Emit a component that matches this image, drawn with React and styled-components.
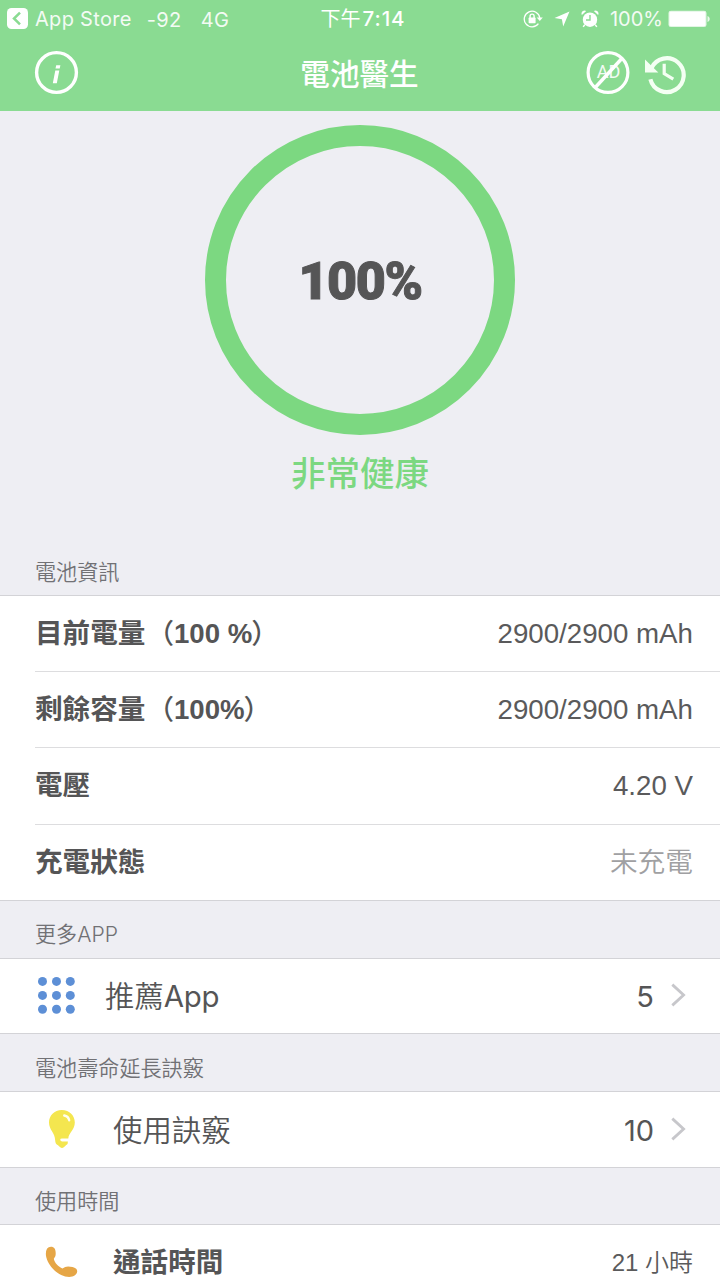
import React from 'react'
import styled, { createGlobalStyle } from 'styled-components'

const GlobalStyle = createGlobalStyle`
*{
  box-sizing: border-box;
}
body{
  margin: 0px;
  background-color: #eeeef3;
  overflow: hidden;
}
`;

const Screen = styled.div`
  width: 720px;
  height: 1280px;
  overflow: hidden;
  display: flex;
  flex-direction: column;
  background-color: #eeeef3;
  color: #555556;
  font-family: "Liberation Sans", "Noto Sans CJK TC", sans-serif;
`;

const Header = styled.header`
  height: 111px;
  flex-shrink: 0;
  background-color: #8adb92;
  color: white;
`;

const StatusBar = styled.div`
  height: 36px;
  display: grid;
  grid-template-columns: 1fr auto 1fr;
  align-items: center;
  padding: 0 10px 0 7px;
  font-family: Inter, "Noto Sans CJK TC", sans-serif;
  font-size: 20px;
  line-height: 36px;
`;

const StatusSide = styled.div`
  display: flex;
  align-items: center;
  height: 36px;
  white-space: pre;
  justify-content: ${(p) => (p.$end ? 'flex-end' : 'flex-start')};
`;

const StatusText = styled.span`
  margin-left: ${(p) => p.$left}px;
  padding-top: ${(p) => p.$top || 0}px;
  letter-spacing: ${(p) => p.$track || 0}px;
  opacity: 0.9;
`;

const Clock = styled.span`
  display: flex;
  padding: 1px 0 0 9px;
  font-size: 20px;
  span{
    font-weight: 500;
    margin-left: 2px;
    font-size: 20.5px;
    letter-spacing: 0.9px;
  }
`;

const StatusIcon = styled.svg`
  display: block;
  flex-shrink: 0;
  margin-left: ${(p) => p.$left || 0}px;
`;

const NavBar = styled.div`
  height: 73px;
  display: grid;
  grid-template-columns: 1fr auto 1fr;
  align-items: center;
  padding: 0 33px;
`;

const NavGroup = styled.div`
  display: flex;
  align-items: center;
  gap: 15px;
  justify-content: ${(p) => (p.$end ? 'flex-end' : 'flex-start')};
  svg{
    display: block;
  }
`;

const Title = styled.h1`
  margin: 0px;
  padding-right: 1px;
  font-family: "Noto Sans CJK TC", sans-serif;
  font-size: 29.6px;
  line-height: 72px;
  font-weight: 500;
`;

const Health = styled.section`
  height: 436px;
  flex-shrink: 0;
  display: flex;
  flex-direction: column;
  align-items: center;
  padding-top: 14px;
`;

const Ring = styled.div`
  width: 310px;
  height: 310px;
  border: 21px solid #7cd881;
  border-radius: 50%;
  display: flex;
  align-items: center;
  justify-content: center;
`;

const Percent = styled.span`
  padding-top: 4px;
  font-family: Roboto, sans-serif;
  font-weight: 900;
  font-size: 52px;
  line-height: 60px;
  letter-spacing: -1.5px;
  -webkit-text-stroke: 1px #555556;
`;

const Verdict = styled.div`
  margin-top: 11px;
  font-family: "Noto Sans CJK TC", sans-serif;
  font-size: 34.5px;
  line-height: 50px;
  font-weight: 500;
  color: #7cd881;
`;

const SectionTitle = styled.h2`
  margin: 0px;
  height: ${(p) => p.$height || 57}px;
  flex-shrink: 0;
  padding: ${(p) => (p.$top === undefined ? 9 : p.$top)}px 0 0 35px;
  font-family: ${(p) => (p.$cjk ? '"Noto Sans CJK TC", sans-serif' : 'Inter, "Noto Sans CJK TC", sans-serif')};
  font-size: 21.1px;
  line-height: 48px;
  font-weight: 350;
  color: #717175;
`;

const List = styled.div`
  flex-shrink: 0;
  background-color: white;
  border-top: 1px solid #d3d3d7;
  border-bottom: 1px solid #d3d3d7;
`;

const Row = styled.div`
  height: ${(p) => p.$height || 75}px;
  display: flex;
  align-items: center;
  padding-right: ${(p) => (p.$link ? 34 : 27)}px;
  margin-left: 35px;
  & + &{
    border-top: 1px solid #dddddf;
  }
`;

const IconCell = styled.div`
  width: ${(p) => p.$width}px;
  flex-shrink: 0;
  padding-bottom: ${(p) => p.$lift || 0}px;
  svg{
    display: block;
  }
`;

const Label = styled.span`
  flex: 1;
  font-size: 27.6px;
  line-height: 74px;
  font-weight: 700;
  white-space: pre;
`;

const Paren = styled.span`
  font-weight: 500;
  margin-left: ${(p) => p.$left || 0}px;
`;

const LinkLabel = styled.span`
  flex: 1;
  padding-top: 2px;
  font-family: Inter, "Noto Sans CJK TC", sans-serif;
  font-size: 29.4px;
  line-height: 72px;
  font-weight: 350;
`;

const Latin = styled.span`
  font-weight: 400;
  letter-spacing: -0.3px;
`;

const Value = styled.span`
  font-size: ${(p) => p.$size || 27.7}px;
  line-height: 74px;
  font-weight: ${(p) => p.$weight || 400};
  color: ${(p) => (p.$muted ? '#a0a0a2' : '#5a5a5b')};
`;

const Count = styled.span`
  padding-top: 2px;
  margin-right: 17px;
  font-family: Inter, sans-serif;
  font-size: 29px;
  line-height: 72px;
`;

const ChevronIcon = styled.svg`
  display: block;
  margin-bottom: 2px;
`;

const info = [
  { label: '目前電量', level: '100 %', value: '2900/2900 mAh', height: 75 },
  { label: '剩餘容量', level: '100%', value: '2900/2900 mAh', height: 76 },
  { label: '電壓', value: '4.20 V', height: 77 },
  { label: '充電狀態', value: '未充電', muted: true, height: 76 },
];

function BackIcon() {
  return (
    <StatusIcon width="21" height="21" viewBox="0 0 21 21">
      <rect width="21" height="21" rx="4.5" fill="#fff" />
      <path d="M13 4.6 L7 10.5 L13 16.4" fill="none" stroke="#8adb92" strokeWidth="2.5" />
    </StatusIcon>
  )
}

function LockIcon() {
  return (
    <StatusIcon width="20" height="20" viewBox="0 0 20 20">
      <path d="M15.4 14.6 A7.8 7.8 0 1 1 16.8 9" fill="none" stroke="#fff" strokeWidth="1.3" />
      <path d="M13.7 8.6 H19.8 L16.8 12 Z" fill="#fff" />
      <rect x="5.6" y="8.6" width="7" height="5.6" rx="0.6" fill="#fff" />
      <path d="M7.1 9 V7.1 A2 2 0 0 1 11.1 7.1 V9" fill="none" stroke="#fff" strokeWidth="1.4" />
    </StatusIcon>
  )
}

function LocationIcon() {
  return (
    <StatusIcon $left={11} width="16" height="16" viewBox="0 0 16 16">
      <path d="M15.5 0.5 L9.2 15.6 L7.9 8.3 L0.5 7 Z" fill="#fff" />
    </StatusIcon>
  )
}

function AlarmIcon() {
  return (
    <StatusIcon $left={11} width="18" height="18" viewBox="0 0 18 18">
      <circle cx="9" cy="9.7" r="7.2" fill="#fff" />
      <path d="M0.9 4.9 A3 3 0 0 1 5.2 1 Z M12.8 1 A3 3 0 0 1 17.1 4.9 Z" fill="#fff" />
      <path d="M3.8 14.6 L2.2 16.9 M14.2 14.6 L15.8 16.9" stroke="#fff" strokeWidth="1.5" />
      <path d="M9 5 V10 H5" fill="none" stroke="#8adb92" strokeWidth="1.4" />
    </StatusIcon>
  )
}

function BatteryIcon() {
  return (
    <StatusIcon $left={5} width="42" height="18" viewBox="0 0 42 18">
      <rect x="0.5" y="0.7" width="38" height="16.4" rx="2.4" fill="#fff" opacity="0.75" />
      <rect x="1.6" y="1.8" width="35.8" height="14.2" rx="1.2" fill="#fff" />
      <path d="M39.5 6 C42.4 6.8 42.4 11.2 39.5 12 Z" fill="#fff" opacity="0.8" />
    </StatusIcon>
  )
}

function InfoIcon() {
  return (
    <svg width="46" height="46" viewBox="0 0 46 46">
      <circle cx="23.5" cy="22.5" r="19.9" fill="none" stroke="#fff" strokeWidth="3.4" />
      <path d="M22.3 20.6 H26.3 L23.8 33.3 H19.8 Z M23.2 15.2 H27.4 L26.7 18.6 H22.5 Z" fill="#fff" />
    </svg>
  )
}

function NoAdIcon() {
  return (
    <svg width="44" height="46" viewBox="0 0 44 46">
      <text x="22.6" y="27.6" textAnchor="middle" fontFamily="Roboto, sans-serif" fontSize="18" fill="#fff" opacity="0.9">AD</text>
      <circle cx="22" cy="22.5" r="19.9" fill="none" stroke="#fff" strokeWidth="3.2" />
      <path d="M8.8 38 L36.3 8" stroke="#fff" strokeWidth="3.4" />
    </svg>
  )
}

function HistoryIcon() {
  return (
    <svg width="42" height="46" viewBox="0 0 42 46">
      <path d="M6.4 18.2 A16.9 16.9 0 1 1 5.4 29.2" fill="none" stroke="#f4fff3" strokeWidth="4.2" />
      <path d="M0 9.4 V22.6 H13.3 Z" fill="#f4fff3" />
      <path d="M19.2 13.8 V23.6 L28.3 29.2" fill="none" stroke="#f4fff3" strokeWidth="3.2" />
    </svg>
  )
}

function DotsIcon() {
  return (
    <svg width="42" height="42" viewBox="0 0 42 42">
      {[7.4, 21.4, 35.3].map((y) =>
        [7.5, 21.5, 35.3].map((x) => <circle key={x + '-' + y} cx={x} cy={y} r="4.5" fill="#5d8fd6" />)
      )}
    </svg>
  )
}

function BulbIcon() {
  return (
    <svg width="54" height="42" viewBox="0 0 54 42">
      <path d="M26.8 2 C19.2 2 14 7.7 14 14.6 C14 22.1 20 24.6 20.2 32.6 Q20.2 36 23 37.3 L25.2 39.2 Q27 40.8 28.8 39.2 L31 37.3 Q33.2 36.2 32.9 33.4 H27 Q25.2 33.2 25.2 31.8 Q25.2 30.6 27 30.5 H33.3 C33.8 24.6 39.8 22 39.8 14.6 C39.8 7.7 34.6 2 26.8 2 Z" fill="#f4e64f" />
      <path d="M29.2 7.5 Q33.4 8.2 34.2 12.3" fill="none" stroke="#fffef0" strokeWidth="2.3" strokeLinecap="round" />
    </svg>
  )
}

function PhoneIcon() {
  return (
    <svg width="54" height="36" viewBox="0 0 54 36">
      <path d="M12 3.8 C13.7 1 18 0.9 19.6 3.6 C20.9 6 21 9.5 20.2 11.5 L18.8 13.8 C19.5 17.7 23.4 22 27.5 23.5 L30.2 22 C32.4 20.8 38.4 21.6 41.2 23.8 C43.8 26.4 41 30.6 37.2 31.6 C30.5 33.2 22.3 29 17.4 23.2 C12.8 17.8 8.8 9.8 12 3.8 Z" fill="#e6a646" />
    </svg>
  )
}

function Chevron() {
  return (
    <ChevronIcon width="15" height="24" viewBox="0 0 15 24">
      <path d="M1.3 1.6 L12.6 12 L1.3 22.4" fill="none" stroke="#c7c7cb" strokeWidth="2.8" />
    </ChevronIcon>
  )
}

function App() {
  return (
    <Screen>
      <GlobalStyle />
      <Header>
        <StatusBar>
          <StatusSide>
            <BackIcon />
            <StatusText $left={7} $track={0.3}>App Store</StatusText>
            <StatusText $left={15} $top={2} $track={0.4}>-92</StatusText>
            <StatusText $left={19} $top={2} $track={0.4}>4G</StatusText>
          </StatusSide>
          <Clock>下午<span>7:14</span></Clock>
          <StatusSide $end>
            <LockIcon />
            <LocationIcon />
            <AlarmIcon />
            <StatusText $left={11}>100%</StatusText>
            <BatteryIcon />
          </StatusSide>
        </StatusBar>
        <NavBar>
          <NavGroup>
            <InfoIcon />
          </NavGroup>
          <Title>電池醫生</Title>
          <NavGroup $end>
            <NoAdIcon />
            <HistoryIcon />
          </NavGroup>
        </NavBar>
      </Header>

      <Health>
        <Ring>
          <Percent>100%</Percent>
        </Ring>
        <Verdict>非常健康</Verdict>
      </Health>

      <SectionTitle $height={48} $top={0} $cjk>電池資訊</SectionTitle>
      <List>
        {info.map((item) => (
          <Row key={item.label} $height={item.height}>
            <Label>
              {item.label}
              {item.level && (
                <>
                  <Paren $left={1}>（</Paren>{item.level}<Paren $left={-1}>）</Paren>
                </>
              )}
            </Label>
            <Value $muted={item.muted} $weight={item.muted ? 350 : 400}>{item.value}</Value>
          </Row>
        ))}
      </List>

      <SectionTitle $top={10}>更多APP</SectionTitle>
      <List>
        <Row $link $height={74}>
          <IconCell $width={70} $lift={2}><DotsIcon /></IconCell>
          <LinkLabel>推薦<Latin>App</Latin></LinkLabel>
          <Count>5</Count>
          <Chevron />
        </Row>
      </List>

      <SectionTitle $cjk>電池壽命延長訣竅</SectionTitle>
      <List>
        <Row $link>
          <IconCell $width={78} $lift={2}><BulbIcon /></IconCell>
          <LinkLabel>使用訣竅</LinkLabel>
          <Count>10</Count>
          <Chevron />
        </Row>
      </List>

      <SectionTitle $cjk $height={56} $top={8}>使用時間</SectionTitle>
      <List>
        <Row>
          <IconCell $width={78}><PhoneIcon /></IconCell>
          <Label>通話時間</Label>
          <Value $size={24} $weight={350}>21 小時</Value>
        </Row>
      </List>
    </Screen>
  )
}

export default App
